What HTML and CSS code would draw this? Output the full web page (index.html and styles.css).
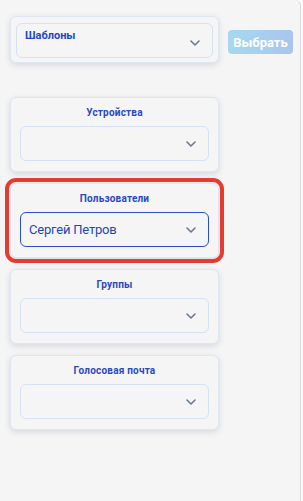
FILE: index.html
```html
<!DOCTYPE html>
<html lang="ru">
<head>
<meta charset="utf-8">
<link rel="stylesheet" href="styles.css">
</head>
<body>
<div class="panel">
  <div class="top-row">
    <div class="card card-top">
      <div class="select select-top">
        <span class="select-label">Шаблоны</span>
        <svg class="chev" viewBox="0 0 10 6" width="10" height="6"><path d="M1 1 L5 5 L9 1" fill="none" stroke="#6b7890" stroke-width="1.6" stroke-linecap="round" stroke-linejoin="round"/></svg>
      </div>
    </div>
    <button class="btn">Выбрать</button>
  </div>

  <div class="cards">
    <div class="card">
      <div class="card-title">Устройства</div>
      <div class="select">
        <span class="select-value"></span>
        <svg class="chev" viewBox="0 0 10 6" width="10" height="6"><path d="M1 1 L5 5 L9 1" fill="none" stroke="#6b7890" stroke-width="1.6" stroke-linecap="round" stroke-linejoin="round"/></svg>
      </div>
    </div>
    <div class="card card-highlight">
      <div class="card-title">Пользователи</div>
      <div class="select select-active">
        <span class="select-value">Сергей Петров</span>
        <svg class="chev" viewBox="0 0 10 6" width="10" height="6"><path d="M1 1 L5 5 L9 1" fill="none" stroke="#6b7890" stroke-width="1.6" stroke-linecap="round" stroke-linejoin="round"/></svg>
      </div>
    </div>
    <div class="card">
      <div class="card-title">Группы</div>
      <div class="select">
        <span class="select-value"></span>
        <svg class="chev" viewBox="0 0 10 6" width="10" height="6"><path d="M1 1 L5 5 L9 1" fill="none" stroke="#6b7890" stroke-width="1.6" stroke-linecap="round" stroke-linejoin="round"/></svg>
      </div>
    </div>
    <div class="card">
      <div class="card-title">Голосовая почта</div>
      <div class="select">
        <span class="select-value"></span>
        <svg class="chev" viewBox="0 0 10 6" width="10" height="6"><path d="M1 1 L5 5 L9 1" fill="none" stroke="#6b7890" stroke-width="1.6" stroke-linecap="round" stroke-linejoin="round"/></svg>
      </div>
    </div>
  </div>
</div>
</body>
</html>
```

FILE: styles.css
```css
* { box-sizing: border-box; }
html, body {
  margin: 0;
  padding: 0;
  background: #fbfbfb;
  font-family: Roboto, "Noto Sans", sans-serif;
}
.panel {
  width: 301px;
  height: 501px;
  background: #f5f5f5;
  border-right: 1px solid #d9d9d9;
  border-top-right-radius: 6px;
  padding: 16px 0 0 10px;
}
.top-row {
  display: flex;
  align-items: flex-start;
}
.card {
  width: 209px;
  background: #f5f5f5;
  border: 1px solid #dfe5f1;
  border-radius: 6px;
  box-shadow: 0 2px 6px rgba(40, 60, 100, 0.16);
  padding: 9px 9px 10px 9px;
}
.card-top {
  height: 47px;
  padding: 6px 5px 4px 5px;
}
.select {
  height: 35px;
  border: 1px solid #d7e1f4;
  border-radius: 6px;
  display: flex;
  align-items: center;
  justify-content: space-between;
  padding: 0 12px 0 8px;
  position: relative;
}
.select-top {
  align-items: flex-start;
  padding-top: 5px;
}
.select-top .chev {
  margin-top: 11px;
}
.select-label {
  font-size: 11px;
  line-height: 13px;
  font-weight: 700;
  color: #2446cc;
}
.select-value {
  font-size: 13px;
  letter-spacing: -0.2px;
  color: #2346b4;
  line-height: 16px;
}
.select-active {
  border-color: #2a4fc2;
}
.chev {
  display: block;
  flex: none;
}
.btn {
  margin: 14px 0 0 9px;
  width: 65px;
  height: 24px;
  border: none;
  border-radius: 4px;
  background: linear-gradient(90deg, #a5d9f0, #a9c5ee);
  color: #ffffff;
  font-family: Roboto, "Noto Sans", sans-serif;
  font-weight: 700;
  font-size: 13px;
  padding: 0;
}
.cards {
  margin-top: 34px;
  display: flex;
  flex-direction: column;
  gap: 11px;
}
.card-title {
  text-align: center;
  font-size: 10px;
  line-height: 12px;
  font-weight: 700;
  letter-spacing: 0.2px;
  color: #2a48c0;
  margin-bottom: 7px;
}
.card-highlight {
  outline: 4px solid #e53b30;
  outline-offset: 1px;
}
```
